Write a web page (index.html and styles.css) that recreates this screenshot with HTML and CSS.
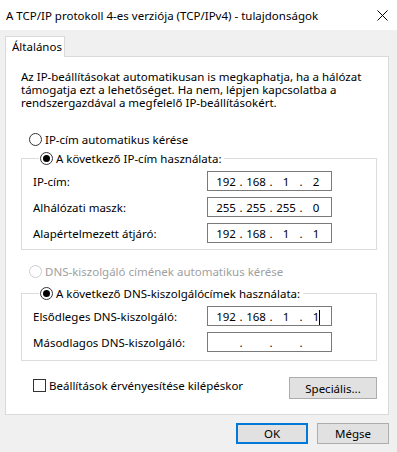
FILE: index.html
```html
<!DOCTYPE html>
<html>
<head>
<meta charset="UTF-8" />
<link rel="stylesheet" href="styles.css">
</head>
<body>
<div class="titlebar">
  <div class="title">A TCP/IP protokoll 4-es verziója (TCP/IPv4) - tulajdonságok</div>
  <svg class="close" width="11" height="11" viewBox="0 0 11 11">
    <path d="M0.5 0.5 L10.5 10.5 M10.5 0.5 L0.5 10.5" stroke="#000" stroke-width="1" fill="none" />
  </svg>
</div>

<div class="tabs">
  <div class="tab">Általános</div>
</div>

<div class="panel">
  <p class="intro">
    Az IP-beállításokat automatikusan is megkaphatja, ha a hálózat<br>
    támogatja ezt a lehetőséget. Ha nem, lépjen kapcsolatba a<br>
    rendszergazdával a megfelelő IP-beállításokért.
  </p>

  <div class="option"><span class="radio"></span>IP-cím automatikus kérése</div>

  <fieldset class="group">
    <legend><div class="option"><span class="radio on"></span>A következő IP-cím használata:</div></legend>
    <div class="row">
      <span>IP-cím:</span>
      <div class="ip"><b>192</b><i>.</i><b>168</b><i>.</i><b>1</b><i>.</i><b>2</b></div>
    </div>
    <div class="row">
      <span>Alhálózati maszk:</span>
      <div class="ip"><b>255</b><i>.</i><b>255</b><i>.</i><b>255</b><i>.</i><b>0</b></div>
    </div>
    <div class="row">
      <span>Alapértelmezett átjáró:</span>
      <div class="ip"><b>192</b><i>.</i><b>168</b><i>.</i><b>1</b><i>.</i><b>1</b></div>
    </div>
  </fieldset>

  <div class="option off"><span class="radio"></span>DNS-kiszolgáló címének automatikus kérése</div>

  <fieldset class="group dns">
    <legend><div class="option"><span class="radio on"></span>A következő DNS-kiszolgálócímek használata:</div></legend>
    <div class="row">
      <span>Elsődleges DNS-kiszolgáló:</span>
      <div class="ip"><b>192</b><i>.</i><b>168</b><i>.</i><b>1</b><i>.</i><b class="caret">1</b></div>
    </div>
    <div class="row">
      <span>Másodlagos DNS-kiszolgáló:</span>
      <div class="ip"><b></b><i>.</i><b></b><i>.</i><b></b><i>.</i><b></b></div>
    </div>
  </fieldset>

  <div class="bottom">
    <div class="check"><span class="box"></span>Beállítások érvényesítése kilépéskor</div>
    <button class="btn adv">Speciális...</button>
  </div>
</div>

<div class="footer">
  <button class="btn ok">OK</button>
  <button class="btn">Mégse</button>
</div>
</body>
</html>
```

FILE: styles.css
```css
* {
  box-sizing: border-box;
}

body {
  margin: 0;
  width: 397px;
  height: 452px;
  background: #f0f0f0;
  font-family: 'Noto Sans', 'Open Sans', sans-serif;
  font-size: 11.5px;
  color: #000;
  overflow: hidden;
}

div.titlebar {
  height: 30px;
  background: #fff;
  display: flex;
  align-items: center;
  justify-content: space-between;
  padding: 0 9px 0 6px;
}

div.titlebar .title {
  font-size: 11.5px;
}

div.tabs {
  display: flex;
  padding: 6px 0 0 5px;
}

div.tab {
  width: 60px;
  height: 21px;
  background: #fff;
  border: 1px solid #d9d9d9;
  border-bottom: none;
  padding: 2px 0 0 6px;
  margin-bottom: -1px;
  position: relative;
}

div.panel {
  margin: 0 8px 0 5px;
  height: 359px;
  background: #fff;
  border: 1px solid #d9d9d9;
  padding: 13px 0 0 15px;
}

p.intro {
  margin: 0;
  line-height: 13px;
  white-space: nowrap;
}

div.option {
  display: flex;
  align-items: center;
  height: 16px;
  margin-left: 8px;
}

div.panel > div.option {
  margin-top: 22px;
}

div.option.off {
  color: #a0a0a0;
  margin-top: 13px !important;
}

span.radio {
  width: 13px;
  height: 13px;
  border: 1px solid #333;
  border-radius: 50%;
  margin-right: 3px;
  display: flex;
  align-items: center;
  justify-content: center;
  background: #fff;
}

div.option.off span.radio {
  border-color: #cccccc;
}

span.radio.on::after {
  content: '';
  width: 7px;
  height: 7px;
  border-radius: 50%;
  background: #000;
}

fieldset.group {
  margin: 3px 0 0 0;
  width: 356px;
  border: 1px solid #dcdcdc;
  padding: 5px 0 6px 11px;
}

fieldset.group legend {
  margin-left: 6px;
  padding: 0 3px 0 1px;
}

fieldset.group legend div.option {
  margin-left: 0;
}

fieldset.dns {
  margin-top: 6px;
  padding-bottom: 8px;
}

div.row {
  display: grid;
  grid-template-columns: 174px 125px;
  align-items: center;
  height: 20px;
  margin-bottom: 6px;
}

div.row:last-child {
  margin-bottom: 0;
}

div.ip {
  height: 20px;
  border: 1px solid #7a7a7a;
  display: flex;
  align-items: center;
  padding-left: 6px;
}

div.ip b {
  font-weight: normal;
  width: 24px;
  text-align: center;
}

div.ip i {
  font-style: normal;
  width: 6px;
  text-align: center;
}

div.ip b.caret {
  position: relative;
}

div.ip b.caret::after {
  content: '';
  position: absolute;
  top: 1px;
  left: 15px;
  width: 1px;
  height: 15px;
  background: #000;
}

div.bottom {
  display: flex;
  justify-content: space-between;
  align-items: center;
  width: 356px;
  margin-top: 16px;
}

div.check {
  display: flex;
  align-items: center;
  margin-left: 12px;
  margin-bottom: 5px;
}

span.box {
  width: 13px;
  height: 13px;
  border: 1px solid #333;
  margin-right: 3px;
}

button.btn {
  font-family: inherit;
  font-size: 11.5px;
  color: #000;
  background: #e1e1e1;
  border: 1px solid #adadad;
  border-radius: 0;
  padding: 0;
  height: 21px;
  width: 72px;
}

button.adv {
  width: 88px;
  height: 22px;
}

button.ok {
  border: 2px solid #0078d7;
}

div.footer {
  display: flex;
  justify-content: flex-end;
  gap: 9px;
  padding: 8px 8px 0 0;
}
```
